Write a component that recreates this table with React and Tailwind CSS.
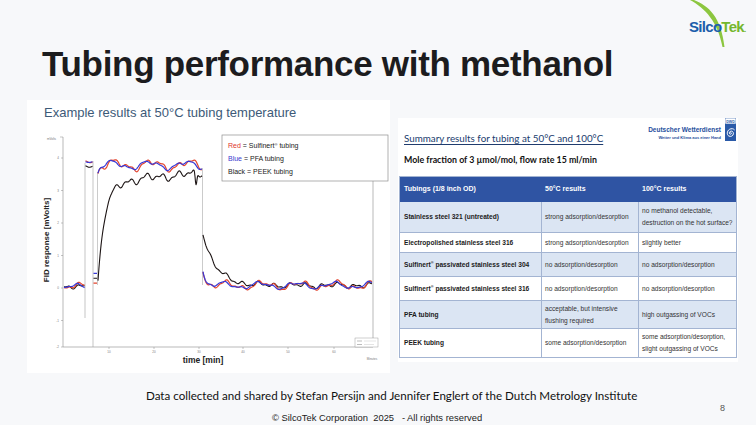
import React from "react";

// chart helpers: page coordinates are used directly in the svg viewBox
const Y = (v) => 288 - v * 32.5;
const wob = (x, s) =>
  0.08 * Math.sin(x * 0.17 + s) + 0.05 * Math.sin(x * 0.39 + s * 1.7) + 0.025 * Math.sin(x * 0.8 + s * 2.3);

const level = (kind, x) => {
  const s = kind === "red" ? 0.6 : kind === "blue" ? 2.1 : 4.0;
  const n = wob(x, 1.0) + 0.5 * wob(x, s);
  if (x < 85) return 0.02 + n * 0.8;
  if (x < 93) return (kind === "black" ? 3.75 : 3.9) + n * 0.3;
  if (x < 97.5) return kind === "blue" ? 0.45 : kind === "red" ? 0.15 : 0.3;
  if (x <= 202) {
    if (kind === "black") {
      const dip = -0.45 * Math.exp(-((x - 196) ** 2) / 1.5);
      return (
        3.3 * (1 - Math.exp(-(x - 97.5) / 7)) +
        0.003 * Math.max(0, x - 120) +
        1.3 * n * Math.min(1, (x - 97) / 25) +
        dip
      );
    }
    return 3.78 + n - 0.25 * Math.exp(-(x - 97.5) / 1.5);
  }
  if (kind === "black") return 0.08 + 1.6 * Math.exp(-(x - 203) / 13) + n * 0.8;
  return 0.08 + 0.5 * Math.exp(-(x - 203) / 3) + n * 0.8;
};

const segments = [
  [64, 84.5],
  [85.5, 92.5],
  [93.5, 97],
  [98, 202],
  [203, 372],
];

const trace = (kind) =>
  segments
    .map(([a, b]) => {
      const pts = [];
      for (let x = a; x <= b + 0.01; x += 0.5) pts.push(`${x},${Y(level(kind, x)).toFixed(1)}`);
      return "M" + pts.join(" L");
    })
    .join(" ");

const yTicks = [
  { v: 4, y: 158 },
  { v: 3, y: 190.5 },
  { v: 2, y: 223 },
  { v: 1, y: 255.5 },
  { v: 0, y: 288 },
  { v: -1, y: 320.5 },
  { v: -2, y: 347 },
];
const xTicks = [109, 154, 199, 243, 288, 334];

const SilcoLogo = () => (
  <svg width="70" height="48" viewBox="0 0 70 48">
    <path d="M8 0 C23 6 35 17 38.5 47 L36.5 47 C32 22 19 8 4 0 Z" fill="#8cc63f" />
    <text
      x="3"
      y="32"
      fontSize="15"
      fontWeight="700"
      letterSpacing="-0.7"
      fontFamily="'Liberation Sans', Arial, sans-serif"
    >
      <tspan fill="#1b5eab">Silco</tspan>
      <tspan fill="#74b72e">Tek</tspan>
      <tspan fill="#74b72e" fontSize="8">.</tspan>
    </text>
  </svg>
);

const DwdLogo = () => (
  <div className="flex items-start gap-[4px] pr-[2px]">
    <div className="flex flex-col items-end pt-[9px] text-[#1f4f9d] font-bold leading-none">
      <span className="text-[6.5px]">Deutscher Wetterdienst</span>
      <span className="text-[4px] mt-[2px]">Wetter und Klima aus einer Hand</span>
    </div>
    <svg width="11" height="23" viewBox="0 0 11 23">
      <rect x="0" y="0" width="11" height="23" fill="#2a5aa8" />
      <rect x="0" y="0" width="11" height="6" fill="#ffffff" stroke="#2a5aa8" strokeWidth="0.6" />
      <text x="5.5" y="4.8" fontSize="3.6" fontWeight="700" textAnchor="middle" fill="#2a5aa8" fontFamily="'Liberation Sans', Arial, sans-serif">
        DWD
      </text>
      <path
        d="M5.5 14.5 C6.6 14.5 6.8 16 5.6 16.2 C4.2 16.4 3.8 14.2 5.2 13.4 C7 12.4 8.6 14 8.4 15.8 C8.2 18 5.6 19 3.8 18 C1.6 16.8 1.8 13 4.4 11.4 C6.4 10.2 8.6 10.6 9.6 12"
        fill="none"
        stroke="#ffffff"
        strokeWidth="1"
      />
    </svg>
  </div>
);

const Sup = () => <span className="align-super text-[3.8px] leading-none">®</span>;

const rows = [
  {
    a: "Stainless steel 321 (untreated)",
    b: ["strong adsorption/desorption"],
    c: ["no methanol detectable,", "destruction on the hot surface?"],
    h: "h-[31px]",
    blue: true,
  },
  {
    a: "Electropolished stainless steel 316",
    b: ["strong adsorption/desorption"],
    c: ["slightly better"],
    h: "h-[20px]",
  },
  {
    a: "passivated stainless steel 304",
    sul: true,
    b: ["no adsorption/desorption"],
    c: ["no adsorption/desorption"],
    h: "h-[24px]",
    blue: true,
  },
  {
    a: "passivated stainless steel 316",
    sul: true,
    b: ["no adsorption/desorption"],
    c: ["no adsorption/desorption"],
    h: "h-[24px]",
  },
  {
    a: "PFA tubing",
    b: ["acceptable, but intensive", "flushing required"],
    c: ["high outgassing of VOCs"],
    h: "h-[28px]",
    blue: true,
  },
  {
    a: "PEEK tubing",
    b: ["some adsorption/desorption"],
    c: ["some adsorption/desorption,", "slight outgassing of VOCs"],
    h: "h-[28px]",
  },
];

const Chart = () => (
  <svg width="363" height="253" viewBox="27 120 363 253" className="block">
    {/* axes */}
    <line x1="63" y1="137" x2="63" y2="347" stroke="#8a8a8a" strokeWidth="0.6" />
    <line x1="63" y1="347" x2="373" y2="347" stroke="#8a8a8a" strokeWidth="0.6" />
    <line x1="373" y1="181" x2="373" y2="347" stroke="#8a8a8a" strokeWidth="0.6" />
    <line x1="60" y1="137" x2="63" y2="137" stroke="#8a8a8a" strokeWidth="0.5" />
    <text x="56" y="140" fontSize="3" fill="#777" textAnchor="end" fontFamily="'Liberation Sans', Arial, sans-serif">mVolts</text>
    {yTicks.map((t) => (
      <g key={t.v}>
        <line x1="61" y1={t.y} x2="63" y2={t.y} stroke="#8a8a8a" strokeWidth="0.5" />
        <text x="59" y={t.y + 1} fontSize="3" fill="#777" textAnchor="end" fontFamily="'Liberation Sans', Arial, sans-serif">
          {t.v}
        </text>
      </g>
    ))}
    {xTicks.map((x, i) => (
      <g key={x}>
        <line x1={x} y1="347" x2={x} y2="349" stroke="#8a8a8a" strokeWidth="0.5" />
        <text x={x} y="353" fontSize="3" fill="#777" textAnchor="middle" fontFamily="'Liberation Sans', Arial, sans-serif">
          {(i + 1) * 10}
        </text>
      </g>
    ))}
    <text x="372" y="360" fontSize="3" fill="#777" textAnchor="middle" fontFamily="'Liberation Sans', Arial, sans-serif">Minutes</text>

    {/* instrument marks */}
    <line x1="85" y1="163" x2="85" y2="318" stroke="#a0a0a0" strokeWidth="0.6" />
    <line x1="93" y1="161" x2="93" y2="347" stroke="#a0a0a0" strokeWidth="0.6" />
    <line x1="97.5" y1="172" x2="97.5" y2="285" stroke="#a8a8a8" strokeWidth="0.6" />
    <line x1="202.5" y1="168" x2="202.5" y2="285" stroke="#a8a8a8" strokeWidth="0.6" />

    {/* traces */}
    <path d={trace("black")} fill="none" stroke="#1c1414" strokeWidth="1.1" strokeLinejoin="round" />
    <path d={trace("red")} fill="none" stroke="#e4452e" strokeWidth="1.2" strokeLinejoin="round" />
    <path d={trace("blue")} fill="none" stroke="#3838d6" strokeWidth="1.2" strokeLinejoin="round" />

    {/* legend */}
    <rect x="222" y="135" width="166" height="46" fill="#ffffff" stroke="#8f8f8f" strokeWidth="0.7" />
    <g fontSize="7" fontFamily="'Liberation Sans', Arial, sans-serif" fill="#222">
      <text x="228" y="148">
        <tspan fill="#e0352b">Red</tspan> = Sulfinert<tspan fontSize="4" dy="-2">®</tspan>
        <tspan dy="2"> tubing</tspan>
      </text>
      <text x="228" y="161">
        <tspan fill="#3b3bcf">Blue</tspan> = PFA tubing
      </text>
      <text x="228" y="174">Black = PEEK tubing</text>
    </g>

    {/* small legend */}
    <rect x="355" y="338" width="23" height="9" fill="#fff" stroke="#888" strokeWidth="0.4" />
    <line x1="357" y1="341" x2="362" y2="341" stroke="#555" strokeWidth="0.4" />
    <line x1="357" y1="344.5" x2="362" y2="344.5" stroke="#555" strokeWidth="0.4" />
    <line x1="364" y1="341" x2="376" y2="341" stroke="#bbb" strokeWidth="0.4" />
    <line x1="364" y1="344.5" x2="374" y2="344.5" stroke="#bbb" strokeWidth="0.4" />

    {/* axis titles */}
    <text x="203" y="363" fontSize="8.5" fontWeight="700" textAnchor="middle" fill="#222" fontFamily="'Liberation Sans', Arial, sans-serif">
      time [min]
    </text>
    <text
      x="0"
      y="0"
      fontSize="8"
      fontWeight="700"
      textAnchor="middle"
      fill="#222"
      fontFamily="'Liberation Sans', Arial, sans-serif"
      transform="translate(49 240) rotate(-90)"
    >
      FID response [mVolts]
    </text>
  </svg>
);

export default function App() {
  return (
    <div className="w-[756px] h-[425px] overflow-hidden bg-[#f7f8fa] flex flex-col font-['Liberation_Sans',Arial,sans-serif]">
      {/* header */}
      <div className="flex justify-between h-[100px]">
        <h1 className="pl-[42px] pt-[44px] text-[35px] leading-[40px] font-bold tracking-[-0.3px] text-[#1c1c1e]">
          Tubing performance with methanol
        </h1>
        <SilcoLogo />
      </div>

      {/* content */}
      <div className="flex items-start h-[273px]">
        <div className="ml-[27px] w-[363px] h-[273px] bg-white flex flex-col">
          <div className="pl-[17px] pt-[5px] h-[20px] text-[13px] leading-[15px] text-[#3d5a78]">
            Example results at 50°C tubing temperature
          </div>
          <Chart />
        </div>

        <div className="ml-[8px] mt-[18px] w-[340px] h-[244px] bg-white flex flex-col">
          <div className="flex justify-between h-[36px]">
            <div className="pl-[6px] pt-[14px] text-[9.8px] leading-[12px] text-[#203c6e] underline underline-offset-2 decoration-[0.6px] font-['Lato','Liberation_Sans',sans-serif]">
              Summary results for tubing at 50°C and 100°C
            </div>
            <DwdLogo />
          </div>
          <div className="pl-[6px] h-[12px] text-[8.8px] leading-[12px] font-bold text-[#111] font-['Lato','Liberation_Sans',sans-serif]">
            Mole fraction of 3 µmol/mol, flow rate 15 ml/min
          </div>

          <div className="mt-[10px] ml-[1px] w-[338px] border border-[#a3b4d2]">
            <div className="grid grid-cols-[142px_97px_99px] h-[25px] items-center bg-[#2f54a3] text-white font-bold text-[7px]">
              <div className="pl-[4px]">Tubings (1/8 inch OD)</div>
              <div className="pl-[3px]">50°C results</div>
              <div className="pl-[3px]">100°C results</div>
            </div>
            {rows.map((r, i) => (
              <div
                key={i}
                className={`grid grid-cols-[142px_97px_99px] ${r.h} ${r.blue ? "bg-[#dbe5f3]" : "bg-white"} ${
                  i < rows.length - 1 ? "border-b border-[#a3b4d2]" : ""
                } text-[6.6px] leading-[12px]`}
              >
                <div className="pl-[4px] flex items-center font-bold text-[#1b1b1b] border-r border-[#a3b4d2] whitespace-nowrap">
                  {r.sul ? (
                    <span>
                      Sulfinert<Sup /> {r.a}
                    </span>
                  ) : (
                    r.a
                  )}
                </div>
                <div className="pl-[3px] flex flex-col justify-center text-[#333] border-r border-[#a3b4d2] whitespace-nowrap">
                  {r.b.map((t) => (
                    <span key={t}>{t}</span>
                  ))}
                </div>
                <div className="pl-[3px] flex flex-col justify-center text-[#333] whitespace-nowrap">
                  {r.c.map((t) => (
                    <span key={t}>{t}</span>
                  ))}
                </div>
              </div>
            ))}
          </div>
        </div>
      </div>

      {/* footer */}
      <div className="flex flex-1">
        <div className="flex-1 flex flex-col pt-[16px]">
          <div className="pl-[146px] h-[14px] text-[11.6px] leading-[14px] text-[#111] font-['Lato','Liberation_Sans',sans-serif] whitespace-nowrap">
            Data collected and shared by Stefan Persijn and Jennifer Englert of the Dutch Metrology Institute
          </div>
          <div className="pl-[272px] mt-[9px] text-[9.4px] leading-[11px] text-[#222] whitespace-pre">
            © SilcoTek Corporation  2025   - All rights reserved
          </div>
        </div>
        <div className="pr-[31px] pt-[30px] text-[9px] leading-[11px] text-[#555]">8</div>
      </div>
    </div>
  );
}
